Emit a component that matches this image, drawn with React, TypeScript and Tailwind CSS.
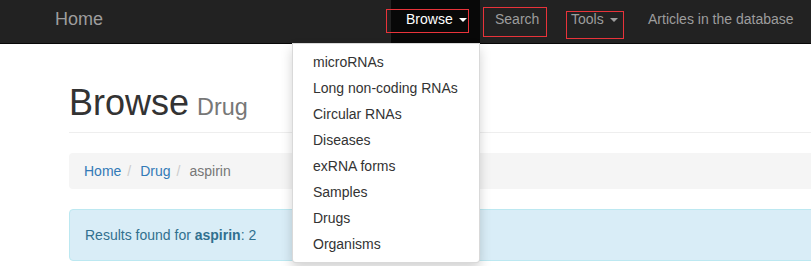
import React from 'react';

const browseItems = [
  'microRNAs',
  'Long non-coding RNAs',
  'Circular RNAs',
  'Diseases',
  'exRNA forms',
  'Samples',
  'Drugs',
  'Organisms',
];

const Caret = () => (
  <span className="inline-block w-0 h-0 ml-[6px] align-middle border-t-[4px] border-t-current border-x-[4px] border-x-transparent" />
);

export default function App() {
  return (
    <div className="relative w-[811px] h-[266px] overflow-hidden bg-white font-['Liberation_Sans',Arial,sans-serif] text-[14px] leading-[20px] text-[#333]">
      {/* navbar */}
      <nav className="relative z-20 h-[44px] bg-[#222] border-b border-[#080808] flex justify-between">
        <a className="pl-[55px] pt-[9px] text-[18px] leading-[20px] text-[#9d9d9d]">Home</a>
        <ul className="flex h-full pr-px">
          <li className="relative w-[89px] h-full bg-[#080808]">
            <a className="block h-full pl-[15px] pt-[9px] text-white whitespace-nowrap">
              Browse
              <Caret />
            </a>
            <ul className="absolute right-0 top-full w-[188px] py-[5px] bg-white border border-black/15 rounded-b-[4px] shadow-[0_6px_12px_rgba(0,0,0,0.175)]">
              {browseItems.map((item) => (
                <li key={item}>
                  <a className="block px-[20px] py-[3px] text-[#333] whitespace-nowrap">{item}</a>
                </li>
              ))}
            </ul>
          </li>
          <li className="w-[75px] h-full">
            <a className="block h-full pl-[15px] pt-[9px] text-[#9d9d9d]">Search</a>
          </li>
          <li className="w-[77px] h-full">
            <a className="block h-full pl-[16px] pt-[9px] text-[#9d9d9d] whitespace-nowrap">
              Tools
              <Caret />
            </a>
          </li>
          <li className="w-[178px] h-full">
            <a className="block h-full pl-[16px] pt-[9px] text-[#9d9d9d] whitespace-nowrap">Articles in the database</a>
          </li>
        </ul>
      </nav>

      {/* red annotation boxes */}
      <div className="absolute z-30 left-[386px] top-[9px] w-[83px] h-[24px] border border-[#e8333a]" />
      <div className="absolute z-30 left-[483px] top-[7px] w-[64px] h-[30px] border border-[#e8333a]" />
      <div className="absolute z-30 left-[566px] top-[11px] w-[58px] h-[28px] border border-[#e8333a]" />

      {/* content */}
      <div className="pl-[69px] -mr-[20px]">
        <div className="mt-[39px] pb-[9px] border-b border-[#eee]">
          <h1 className="text-[36px] leading-[40px] font-normal text-[#333]">
            Browse<small className="ml-[8px] text-[23.4px] leading-none text-[#777]">Drug</small>
          </h1>
        </div>

        <ol className="mt-[20px] flex px-[15px] py-[8px] bg-[#f5f5f5] rounded-[4px]">
          <li>
            <a className="text-[#337ab7]">Home</a>
            <span className="pl-[6px] pr-[9px] text-[#ccc]">/</span>
          </li>
          <li>
            <a className="text-[#337ab7]">Drug</a>
            <span className="pl-[6px] pr-[9px] text-[#ccc]">/</span>
          </li>
          <li className="text-[#777]">aspirin</li>
        </ol>

        <div className="mt-[20px] p-[15px] bg-[#d9edf7] border border-[#bce8f1] rounded-[4px] text-[#31708f]">
          Results found for <b>aspirin</b>: 2
        </div>
      </div>
    </div>
  );
}
